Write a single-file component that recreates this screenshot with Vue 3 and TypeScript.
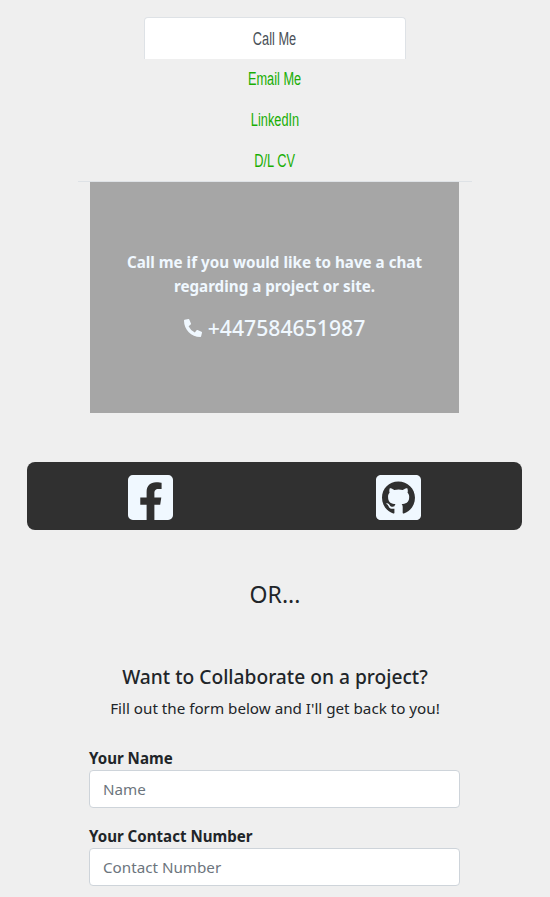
<script setup lang="ts">
const tabs = [
  { label: 'Call Me', active: true },
  { label: 'Email Me', active: false },
  { label: 'LinkedIn', active: false },
  { label: 'D/L CV', active: false },
]
const fields = [
  { label: 'Your Name', placeholder: 'Name' },
  { label: 'Your Contact Number', placeholder: 'Contact Number' },
]
</script>

<template>
  <div class="page">
    <nav class="nav">
      <a v-for="t in tabs" :key="t.label" class="tab" :class="{ active: t.active }"><span class="tab-text">{{ t.label }}</span></a>
    </nav>

    <section class="call">
      <p class="call-text">Call me if you would like to have a chat regarding a project or site.</p>
      <p class="call-phone">
        <svg class="phone-icon" viewBox="0 0 512 512" aria-hidden="true">
          <path fill="currentColor" d="M497.39 361.8l-112-48a24 24 0 0 0-28 6.9l-49.6 60.6A370.66 370.66 0 0 1 130.6 204.11l60.6-49.6a23.94 23.94 0 0 0 6.9-28l-48-112A24.16 24.16 0 0 0 122.6.61l-104 24A24 24 0 0 0 0 48c0 256.5 207.9 464 464 464a24 24 0 0 0 23.4-18.6l24-104a24.29 24.29 0 0 0-14.01-27.6z" />
        </svg>
        <span>+447584651987</span>
      </p>
    </section>

    <section class="social">
      <div class="social-cell">
        <svg class="social-icon" viewBox="0 32 448 448" aria-hidden="true">
          <path fill="currentColor" d="M400 32H48A48 48 0 0 0 0 80v352a48 48 0 0 0 48 48h137.25V327.69h-63V256h63v-54.64c0-62.15 37-96.48 93.67-96.48 27.14 0 55.52 4.84 55.52 4.84v61h-31.27c-30.81 0-40.42 19.12-40.42 38.73V256h68.78l-11 71.69h-57.78V480H400a48 48 0 0 0 48-48V80a48 48 0 0 0-48-48z" />
        </svg>
      </div>
      <div class="social-cell">
        <svg class="social-icon" viewBox="0 32 448 448" aria-hidden="true">
          <path fill="currentColor" d="M400 32H48C21.5 32 0 53.5 0 80v352c0 26.5 21.5 48 48 48h352c26.5 0 48-21.5 48-48V80c0-26.5-21.5-48-48-48zM277.3 415.7c-8.4 1.5-11.5-3.7-11.5-8 0-5.4.2-33 .2-55.3 0-15.6-5.2-25.5-11.3-30.7 37-4.1 76-9.2 76-73.1 0-18.2-6.5-27.3-17.1-39 1.7-4.3 7.4-22-1.7-45-13.9-4.3-45.7 17.9-45.7 17.9-13.2-3.7-27.5-5.6-41.6-5.6-14.1 0-28.4 1.9-41.6 5.6 0 0-31.8-22.2-45.7-17.9-9.1 22.9-3.5 40.6-1.7 45-10.6 11.7-15.6 20.8-15.6 39 0 63.6 37.3 69 74.3 73.1-4.8 4.3-9.1 11.7-10.6 22.3-9.5 4.3-33.8 11.7-48.3-13.9-9.1-15.8-25.5-17.1-25.5-17.1-16.2-.2-1.1 10.2-1.1 10.2 10.8 5 18.4 24.2 18.4 24.2 9.7 29.7 56.1 19.7 56.1 19.7 0 13.9.2 36.5.2 40.6 0 4.3-3 9.5-11.5 8-66-22.1-112.2-84.9-112.2-158.3 0-91.8 70.2-161.5 162-161.5S388 165.6 388 257.4c.1 73.4-44.7 136.3-110.7 158.3z" />
        </svg>
      </div>
    </section>

    <h2 class="or">OR...</h2>

    <h3 class="collab">Want to Collaborate on a project?</h3>
    <p class="fill">Fill out the form below and I'll get back to you!</p>

    <form class="form">
      <div v-for="f in fields" :key="f.label" class="field">
        <label class="label">{{ f.label }}</label>
        <input class="input" type="text" :placeholder="f.placeholder" />
      </div>
    </form>
  </div>
</template>

<style>
html, body { margin: 0; background: #efefef; }
</style>

<style scoped>
.page {
  width: 550px;
  height: 897px;
  overflow: hidden;
  background: #efefef;
  font-family: "Noto Sans", "Open Sans", sans-serif;
  color: #212529;
}
.nav {
  margin: 0 78px;
  padding-top: 17px;
  border-bottom: 1px solid #dee2e6;
  display: flex;
  flex-direction: column;
  align-items: center;
}
.tab {
  box-sizing: border-box;
  width: 262px;
  height: 41px;
  line-height: 41px;
  text-align: center;
  color: #19ae04;
  font-family: "Liberation Sans", sans-serif;
  font-size: 18px;
}
.tab:last-child { height: 40px; }
.tab-text {
  display: inline-block;
  transform: scaleX(0.71);
}
.tab.active {
  height: 42px;
  line-height: 42px;
  background: #fff;
  color: #495057;
  border: 1px solid #dee2e6;
  border-bottom: 0;
  border-radius: 4px 4px 0 0;
}
.call {
  box-sizing: border-box;
  width: 369px;
  height: 231px;
  margin: 0 0 0 90px;
  padding: 68px 24px 0;
  background: #a6a6a6;
  color: #f0f8ff;
  display: flex;
  flex-direction: column;
  align-items: center;
  text-align: center;
}
.call-text {
  margin: 0;
  font-size: 15.2px;
  line-height: 24px;
  font-weight: 700;
}
.call-phone {
  margin: 15px 0 0;
  font-size: 21.2px;
  line-height: 30px;
  font-weight: 500;
  display: flex;
  align-items: center;
  gap: 6px;
}
.phone-icon { width: 18px; height: 18px; }
.social {
  margin: 49px 28px 0 27px;
  padding-top: 3px;
  box-sizing: border-box;
  height: 68px;
  background: #303030;
  border-radius: 8px;
  display: grid;
  grid-template-columns: 1fr 1fr;
  align-items: center;
  justify-items: center;
  color: #f0f8ff;
}
.social-cell { display: flex; }
.social-icon { width: 45px; height: 45px; }
.or {
  margin: 46px 0 0;
  text-align: center;
  font-size: 23px;
  line-height: 36px;
  font-weight: 400;
}
.collab {
  margin: 50px 0 0;
  text-align: center;
  font-size: 19.2px;
  line-height: 30px;
  font-weight: 500;
}
.fill {
  margin: 4px 0 0;
  text-align: center;
  font-size: 15.2px;
  line-height: 24px;
}
.form {
  margin: 26px 90px 0 89px;
  display: flex;
  flex-direction: column;
  gap: 16px;
}
.field { display: flex; flex-direction: column; }
.label {
  font-size: 15.1px;
  line-height: 24px;
  font-weight: 700;
  height: 24px;
}
.input {
  box-sizing: border-box;
  width: 100%;
  height: 38px;
  padding: 6px 13px;
  border: 1px solid #ced4da;
  border-radius: 4px;
  background: #fff;
  font-family: inherit;
  font-size: 15.2px;
  color: #495057;
}
.input::placeholder { color: #6c757d; opacity: 1; }
</style>
